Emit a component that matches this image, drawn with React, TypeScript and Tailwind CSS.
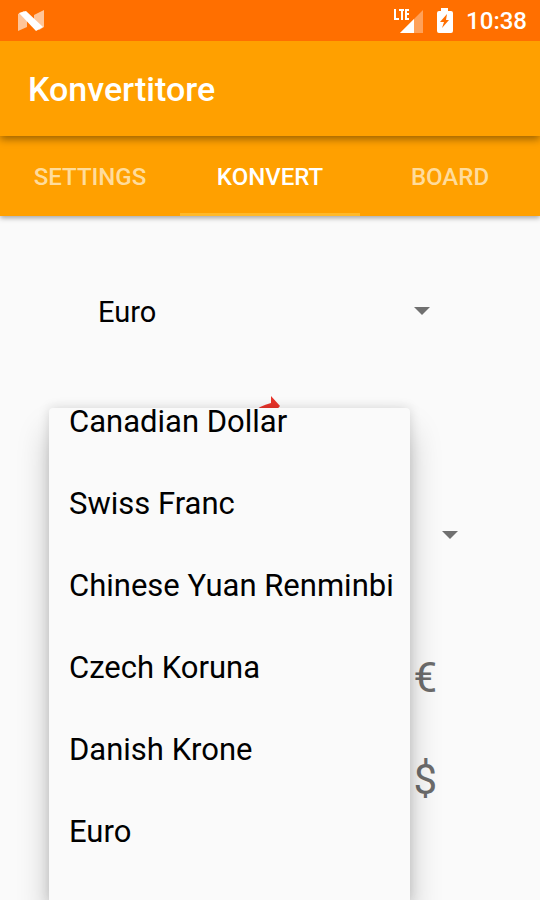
import React, { useState } from 'react';

const TABS = ['SETTINGS', 'KONVERT', 'BOARD'];

const CURRENCIES = [
    'Canadian Dollar',
    'Swiss Franc',
    'Chinese Yuan Renminbi',
    'Czech Koruna',
    'Danish Krone',
    'Euro'
];

const StatusBar: React.FC = () => (
    <div className="relative z-20 flex h-[41px] items-center justify-between bg-[#ff6f00] pr-[13px] pl-[18px] text-white">
        <svg width="26" height="22" viewBox="0 0 26 22" aria-hidden="true">
            <path d="M0 4 L6 1 L9 4 L9 17 L0 21 Z" fill="#fff" opacity=".6" />
            <path d="M16 5 L26 0 V17 L21 20 L16 15 Z" fill="#fff" opacity=".6" />
            <path d="M1 3 L8 1 L25 17 L18 21 Z" fill="#fff" />
        </svg>
        <div className="flex items-center">
            <svg width="32" height="26" viewBox="0 0 32 26" aria-hidden="true">
                <path d="M31 2 V25 H8 Z" fill="#fff" opacity=".35" />
                <path d="M22 11 V25 H8 Z" fill="#fff" />
                <path
                    d="M3 1 V11 H7 M7 2 H12 M10 2 V12 M17 2 H14 V11 H17 M14 6 H17"
                    fill="none"
                    stroke="#fff"
                    strokeWidth="2"
                />
            </svg>
            <svg className="ml-3" width="18" height="26" viewBox="0 0 18 26" aria-hidden="true">
                <path
                    d="M5 0 H12 V3 H15 Q17 3 17 5 V23 Q17 25 15 25 H3 Q1 25 1 23 V5 Q1 3 3 3 H5 Z"
                    fill="#fff"
                />
                <path d="M11 6 L4 14 H8 L6 20 L13 12 H10 Z" fill="#ff6f00" />
            </svg>
            <span className="ml-3 text-2xl leading-8 font-medium">10:38</span>
        </div>
    </div>
);

interface SpinnerProps {
    label: string;
    value: string;
    options: string[];
    onChange: (value: string) => void;
    className?: string;
}

const Spinner: React.FC<SpinnerProps> = ({ label, value, options, onChange, className = '' }) => (
    <div className={`flex h-[82px] items-center ${className}`}>
        <select
            aria-label={label}
            value={value}
            onChange={(e) => onChange(e.target.value)}
            className="h-full min-w-0 flex-1 appearance-none bg-transparent pt-[3px] text-[29px] text-black outline-none"
        >
            {options.map(option => (
                <option key={option} value={option}>{option}</option>
            ))}
        </select>
        <svg className="pointer-events-none shrink-0" width="16" height="9" viewBox="0 0 16 9" aria-hidden="true">
            <path d="M0 0 H16 L8 8 Z" fill="#707070" />
        </svg>
    </div>
);

const App: React.FC = () => {
    const [activeTab, setActiveTab] = useState('KONVERT');
    const [from, setFrom] = useState('Euro');
    const [to, setTo] = useState('Swiss Franc');

    return (
        <div className="flex h-screen flex-col overflow-hidden bg-[#fafafa] font-[Roboto,sans-serif]">
            <StatusBar />

            {/* App bar */}
            <header className="relative z-10 flex h-[95px] items-center bg-[#ffa000] px-7 shadow-[0_3px_8px_rgba(0,0,0,0.4)]">
                <h1 className="text-[34px] leading-10 font-medium text-white">Konvertitore</h1>
            </header>

            {/* Tabs */}
            <nav role="tablist" className="relative flex h-20 shrink-0 bg-[#ffa000] shadow-[0_2px_5px_rgba(0,0,0,0.35)]">
                {TABS.map(tab => (
                    <button
                        key={tab}
                        role="tab"
                        aria-selected={activeTab === tab}
                        onClick={() => setActiveTab(tab)}
                        className={`flex-1 border-b-[3px] pt-1 text-2xl font-medium ${activeTab === tab
                                ? 'border-[#ffb92a] text-white'
                                : 'border-transparent text-[#ffdc9c]'
                            }`}
                    >
                        {tab}
                    </button>
                ))}
            </nav>

            <main className="relative flex-1 pt-[54px]">
                <Spinner
                    label="From currency"
                    value={from}
                    options={CURRENCIES}
                    onChange={setFrom}
                    className="pr-[110px] pl-[98px]"
                />

                {/* Swap arrow */}
                <div className="mt-11 flex justify-center">
                    <svg width="60" height="60" viewBox="0 0 60 60" aria-hidden="true">
                        <path d="M31 0 L40 10 L31 20 V15 Q16 16 10 28 Q10 12 31 7 Z" fill="#e8332a" />
                    </svg>
                </div>

                <Spinner
                    label="To currency"
                    value={to}
                    options={CURRENCIES}
                    onChange={setTo}
                    className="mt-[38px] pr-[82px] pl-[70px]"
                />

                {/* Amount symbols */}
                <div className="mt-[72px] flex flex-col items-end gap-[42px] pr-[103px] text-[42px] leading-[60px] text-[#6c6c6c]">
                    <span>€</span>
                    <span>$</span>
                </div>

                {/* Open dropdown, scrolled part of a row down */}
                <div className="absolute top-48 bottom-0 left-[49px] overflow-hidden rounded-t-sm bg-[#fafafa] shadow-[0_24px_32px_rgba(0,0,0,0.22),0_0_12px_rgba(0,0,0,0.14)]">
                    <ul role="listbox" aria-label="Currencies" className="-mt-[27px]">
                        {CURRENCIES.map(currency => (
                            <li key={currency} role="option" aria-selected={currency === to}>
                                <button
                                    onClick={() => setTo(currency)}
                                    className="h-[82px] w-full pr-4 pl-5 text-left text-[31px] leading-[26px] whitespace-nowrap text-black"
                                >
                                    {currency}
                                </button>
                            </li>
                        ))}
                    </ul>
                </div>
            </main>
        </div>
    );
};

export default App;
